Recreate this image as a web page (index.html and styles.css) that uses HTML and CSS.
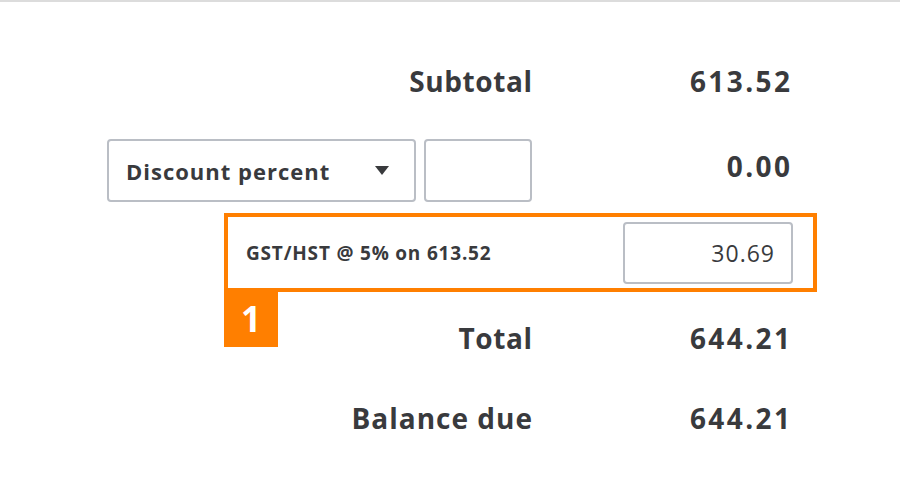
FILE: index.html
```html
<!DOCTYPE html>
<html lang="en">
<head>
<meta charset="utf-8">
<title>Invoice summary</title>
<link rel="stylesheet" href="styles.css">
</head>
<body>
<div class="topline"></div>
<main class="summary">
  <div class="row r-sub">
    <span class="label">Subtotal</span>
    <span class="amount">613.52</span>
  </div>
  <div class="row r-disc">
    <div class="controls">
      <div class="select"><span class="select-text">Discount percent</span><span class="caret"></span></div>
      <div class="pct"></div>
    </div>
    <span class="amount amount-disc">0.00</span>
  </div>
  <div class="tax-wrap">
    <div class="tax">
      <span class="tax-label">GST/HST @ 5% on 613.52</span>
      <div class="tax-input">30.69</div>
    </div>
    <span class="badge">1</span>
  </div>
  <div class="row r-total">
    <span class="label">Total</span>
    <span class="amount">644.21</span>
  </div>
  <div class="row r-bal">
    <span class="label label-bal">Balance due</span>
    <span class="amount">644.21</span>
  </div>
</main>
</body>
</html>
```
FILE: styles.css
```css
html, body {
  margin: 0;
  padding: 0;
  background: #ffffff;
}
body {
  font-family: "Open Sans", Lato, sans-serif;
  color: #393a3d;
  width: 900px;
  height: 500px;
  overflow: hidden;
}
.topline {
  height: 2px;
  background: #dcdcdc;
}
.summary {
  display: flex;
  flex-direction: column;
}
.row {
  display: grid;
  grid-template-columns: 1fr 258px;
  align-items: center;
  padding: 0 110px 0 107px;
}
.label, .amount {
  font-size: 28px;
  font-weight: 700;
  line-height: 40px;
  text-align: right;
}
.label {
  letter-spacing: 0.6px;
  margin-right: -0.6px;
}
.label-bal {
  letter-spacing: 1px;
  margin-right: -1px;
}
.amount {
  letter-spacing: 2.4px;
  margin-right: -2.4px;
}
.amount-disc {
  position: relative;
  top: -5px;
}
.r-sub { margin-top: 59px; }
.r-disc { margin-top: 38px; height: 63px; }
.r-total { margin-top: 26px; }
.r-bal { margin-top: 40px; }
.controls {
  display: flex;
  gap: 8px;
  justify-content: flex-end;
}
.select {
  box-sizing: border-box;
  width: 309px;
  height: 63px;
  border: 2px solid #babec5;
  border-radius: 4px;
  display: flex;
  align-items: center;
  justify-content: space-between;
  padding: 0 25px 0 17px;
}
.select-text {
  font-size: 22px;
  font-weight: 700;
  letter-spacing: 1px;
}
.caret {
  width: 0;
  height: 0;
  border-left: 7px solid transparent;
  border-right: 7px solid transparent;
  border-top: 9px solid #393a3d;
}
.pct {
  box-sizing: border-box;
  width: 108px;
  height: 63px;
  border: 2px solid #babec5;
  border-radius: 4px;
}
.tax-wrap {
  position: relative;
  margin-top: 11px;
  margin-left: 224px;
  width: 593px;
}
.tax {
  box-sizing: border-box;
  height: 79px;
  border: 4px solid #ff7f00;
  display: flex;
  align-items: center;
  justify-content: space-between;
  padding: 0 20px 0 18px;
}
.tax-label {
  font-size: 19px;
  font-weight: 700;
  letter-spacing: 0.8px;
}
.tax-input {
  box-sizing: border-box;
  width: 170px;
  height: 62px;
  border: 2px solid #babec5;
  border-radius: 4px;
  font-size: 23px;
  font-weight: 400;
  text-align: right;
  line-height: 58px;
  padding-right: 16px;
  letter-spacing: 1px;
}
.badge {
  position: absolute;
  left: 0;
  top: 79px;
  width: 54px;
  height: 55px;
  background: #ff7f00;
  color: #ffffff;
  font-size: 35px;
  font-weight: 700;
  line-height: 53px;
  text-align: center;
}
```
